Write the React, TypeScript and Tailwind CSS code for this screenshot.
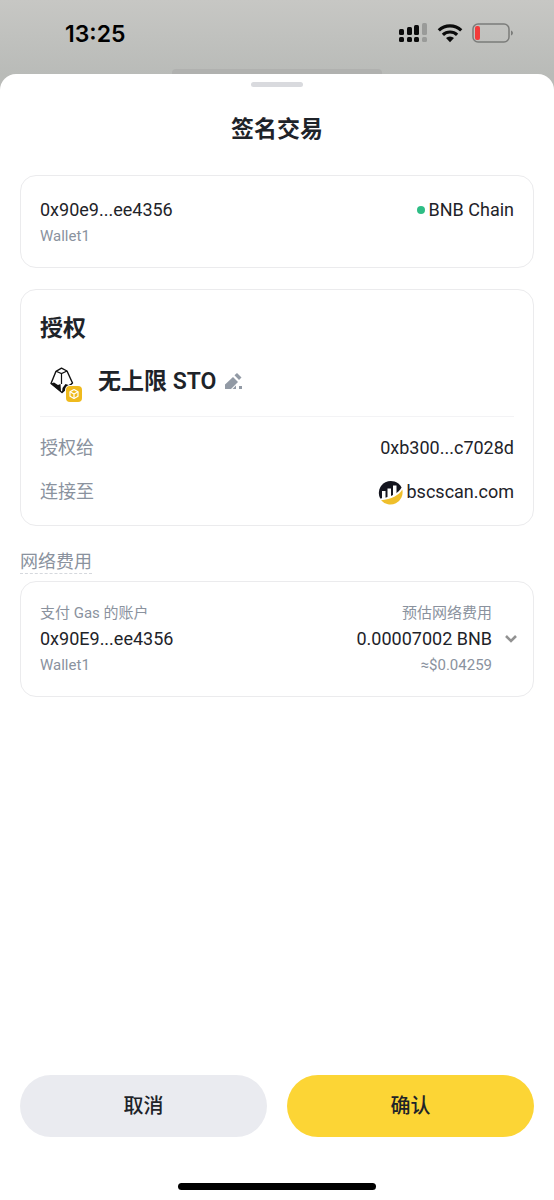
import React from 'react';

interface WalletLineProps {
  address: string;
  name: string;
}

const SignalIcon = () => (
  <svg width="30" height="22" viewBox="0 0 30 22" aria-hidden="true">
    <g fill="#0b0b0b">
      <rect x="1" y="7" width="5" height="6" rx="1.5" />
      <rect x="9" y="5" width="5" height="8" rx="1.5" />
      <rect x="16" y="3" width="5" height="10" rx="1.5" />
      <rect x="1" y="15" width="5" height="5" rx="1.5" />
      <rect x="9" y="15" width="5" height="5" rx="1.5" />
      <rect x="16" y="15" width="5" height="5" rx="1.5" />
    </g>
    <g fill="#9a9b99">
      <rect x="24" y="1" width="5" height="12" rx="1.5" />
      <rect x="24" y="15" width="5" height="5" rx="1.5" />
    </g>
  </svg>
);

const WifiIcon = () => (
  <svg width="26" height="20" viewBox="0 0 26 20" aria-hidden="true">
    <g fill="none" stroke="#0b0b0b" strokeWidth="3.2">
      <path d="M1.8 7.4a16 16 0 0 1 22.4 0" />
      <path d="M5.9 11.9a10.2 10.2 0 0 1 14.2 0" />
    </g>
    <path d="M9 15.1a5.8 5.8 0 0 1 8 0L13 19.2z" fill="#0b0b0b" />
  </svg>
);

const BatteryIcon = () => (
  <svg width="42" height="20" viewBox="0 0 42 20" aria-hidden="true">
    <rect x="1" y="1" width="36" height="18" rx="5" fill="none" stroke="#7b7c7a" strokeWidth="1.5" />
    <rect x="3" y="3" width="5" height="14" rx="2" fill="#f23b3b" />
    <path d="M39 7.5c2.6.8 2.6 4.2 0 5z" fill="#7b7c7a" />
  </svg>
);

const TokenIcon = () => (
  <svg width="44" height="44" viewBox="0 0 44 44" className="shrink-0" aria-hidden="true">
    <path
      d="M16 11.3 21.5 8.2 27 11 32.5 23 22 32.5 11 23.5z"
      fill="#fff"
      stroke="#111"
      strokeWidth="1.4"
      strokeLinejoin="round"
    />
    <path d="M16 11.3 21.5 13.5 27 11M21.5 13.5V24" fill="none" stroke="#111" strokeWidth="1.2" />
    <path d="M11 23.5 14 22.5 18 25 20.5 24 21 32z" fill="#111" />
    <path d="M22 32.5 22.5 28 25.5 24 28.5 25 32.5 23z" fill="#111" />
    <rect x="25" y="25" width="18" height="18" rx="5" fill="#fff" />
    <rect x="26" y="26" width="16" height="16" rx="4" fill="#efba1d" />
    <g fill="none" stroke="#fff" strokeWidth="1.2" strokeLinejoin="round">
      <path d="M34 29.5 38 31.8V36.2L34 38.5 30 36.2V31.8z" />
      <path d="M30 31.8 34 34 38 31.8M34 34V38.5" />
    </g>
  </svg>
);

const EditIcon = () => (
  <svg width="20" height="20" viewBox="0 0 20 20" aria-hidden="true">
    <g fill="#929aa5">
      <path d="M1 12.5 9 5 14 10 7 17H1z" />
      <path d="M10.5 3.2 13 1 17.5 5.5 15 8z" />
      <path d="M8.5 17 12 13.5V17z" />
      <rect x="15" y="14" width="3" height="3" />
    </g>
  </svg>
);

const ScanLogo = () => (
  <svg width="26" height="26" viewBox="0 0 26 26" aria-hidden="true">
    <path d="M3.2 19.5A12 12 0 1 1 24.6 8.5C22 13.5 14 18.5 3.2 19.5z" fill="#14151f" />
    <path d="M4 21.3C14 20.5 22.5 16 25.3 10.5A12.3 12.3 0 0 1 4 21.3z" fill="#efbf2b" />
    <g fill="#fff">
      <path d="M5 12H8.5V19.5L5 20.3z" />
      <path d="M10.5 9.5H14V18L10.5 19.1z" />
      <path d="M16 6.5H19.5V15.5L16 17.2z" />
    </g>
  </svg>
);

const ChevronIcon = () => (
  <svg width="14" height="10" viewBox="0 0 14 10" aria-hidden="true">
    <path d="M2 2 7 7 12 2" fill="none" stroke="#929292" strokeWidth="2.6" />
  </svg>
);

const StatusBar = () => (
  <header className="relative flex h-[74px] items-start justify-between bg-linear-to-b from-[#c7c7c4] to-[#b9bbb8] pt-[18px] pl-[65px] pr-10">
    <span className="font-['Inter',sans-serif] text-[23px] leading-8 font-semibold text-black">13:25</span>
    <div className="flex h-[30px] items-center gap-[9px]">
      <SignalIcon />
      <WifiIcon />
      <BatteryIcon />
    </div>
    <div className="absolute right-[31%] bottom-0 left-[31%] h-[5px] rounded-t bg-[#b0b1af]" />
  </header>
);

const Card = ({ className, children }: { className: string; children: React.ReactNode }) => (
  <section className={`rounded-2xl border border-[#ebebed] px-[19px] ${className}`}>{children}</section>
);

const WalletLine: React.FC<WalletLineProps> = ({ address, name }) => (
  <>
    <p className="text-lg leading-[26px]">{address}</p>
    <p className="text-[15px] leading-[26px] text-[#8a929e]">{name}</p>
  </>
);

const App: React.FC = () => {
  return (
    <div className="flex min-h-screen flex-col bg-[#b9bbb8] font-[Roboto,'Noto_Sans_CJK_SC',sans-serif] text-[#1e2329]">
      <StatusBar />

      <main className="flex flex-1 flex-col rounded-t-2xl bg-white px-5 pt-2 pb-[10px]">
        <div className="mx-auto h-[5px] w-[52px] rounded-full bg-[#d9dade]" />
        <h1 className="mt-[27px] text-center text-[23px] leading-8 font-semibold">签名交易</h1>

        <Card className="mt-[29px] flex items-start justify-between pt-[21px] pb-[18px]">
          <div>
            <WalletLine address="0x90e9...ee4356" name="Wallet1" />
          </div>
          <div className="flex items-center gap-1 text-lg leading-[26px]">
            <span className="size-2 rounded-full bg-[#2ebd85]" />
            BNB Chain
          </div>
        </Card>

        <Card className="mt-[21px] pt-[21px] pb-[11px]">
          <h2 className="text-[23px] leading-9 font-semibold">授权</h2>
          <div className="flex h-[70px] items-center border-b border-[#f3f3f5]">
            <TokenIcon />
            <span className="ml-[14px] text-[23px] leading-8 font-semibold">无上限 STO</span>
            <button className="ml-2" aria-label="编辑">
              <EditIcon />
            </button>
          </div>
          <dl className="pt-[9px] text-lg">
            <div className="flex h-11 items-center justify-between">
              <dt className="text-[#8a929e]">授权给</dt>
              <dd>0xb300...c7028d</dd>
            </div>
            <div className="flex h-11 items-center justify-between">
              <dt className="text-[#8a929e]">连接至</dt>
              <dd className="flex items-center gap-1">
                <ScanLogo />
                bscscan.com
              </dd>
            </div>
          </dl>
        </Card>

        <h3 className="mt-6 self-start border-b border-dashed border-[#d5d8dd] text-lg leading-[23px] text-[#8a929e]">
          网络费用
        </h3>

        <Card className="mt-[7px] flex justify-between py-[18px]">
          <div>
            <p className="text-[15px] leading-[26px] text-[#8a929e]">支付 Gas 的账户</p>
            <WalletLine address="0x90E9...ee4356" name="Wallet1" />
          </div>
          <div className="flex items-center gap-3">
            <div className="text-right">
              <p className="text-[15px] leading-[26px] text-[#8a929e]">预估网络费用</p>
              <WalletLine address="0.00007002 BNB" name="≈$0.04259" />
            </div>
            <button className="-mr-1" aria-label="展开">
              <ChevronIcon />
            </button>
          </div>
        </Card>

        <div className="mt-auto flex gap-5">
          <button className="h-[62px] flex-1 rounded-full bg-[#eaebf0] text-xl font-medium">取消</button>
          <button className="h-[62px] flex-1 rounded-full bg-[#fcd535] text-xl font-medium">确认</button>
        </div>
        <div className="mx-auto mt-[46px] h-[7px] w-[198px] rounded-full bg-black" />
      </main>
    </div>
  );
};

export default App;
